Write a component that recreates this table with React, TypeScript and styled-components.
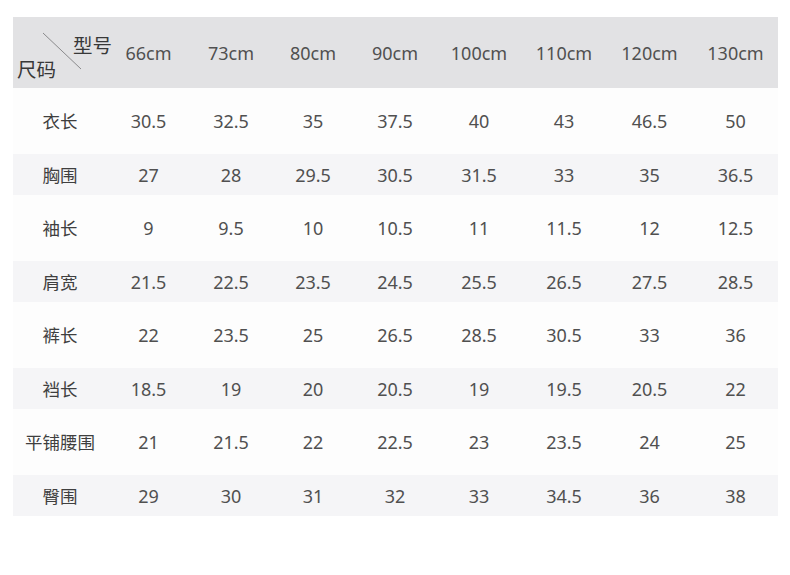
import React from "react";
import styled, { createGlobalStyle } from "styled-components";

const GlobalStyle = createGlobalStyle`
  html, body {
    margin: 0;
    padding: 0;
    background: #ffffff;
  }
  body {
    font-family: "Noto Sans", "Noto Sans CJK SC", sans-serif;
  }
`;

const sizes = ["66cm", "73cm", "80cm", "90cm", "100cm", "110cm", "120cm", "130cm"];

const rows: { label: string; values: string[] }[] = [
  { label: "衣长", values: ["30.5", "32.5", "35", "37.5", "40", "43", "46.5", "50"] },
  { label: "胸围", values: ["27", "28", "29.5", "30.5", "31.5", "33", "35", "36.5"] },
  { label: "袖长", values: ["9", "9.5", "10", "10.5", "11", "11.5", "12", "12.5"] },
  { label: "肩宽", values: ["21.5", "22.5", "23.5", "24.5", "25.5", "26.5", "27.5", "28.5"] },
  { label: "裤长", values: ["22", "23.5", "25", "26.5", "28.5", "30.5", "33", "36"] },
  { label: "裆长", values: ["18.5", "19", "20", "20.5", "19", "19.5", "20.5", "22"] },
  { label: "平铺腰围", values: ["21", "21.5", "22", "22.5", "23", "23.5", "24", "25"] },
  { label: "臀围", values: ["29", "30", "31", "32", "33", "34.5", "36", "38"] },
];

const Page = styled.div`
  padding: 17px 12px 0 13px;
`;

const Table = styled.div`
  width: 765px;
  display: flex;
  flex-direction: column;
`;

const Row = styled.div<{ $tone: "head" | "light" | "shade" }>`
  display: grid;
  grid-template-columns: 94px 83px 82px 82px 82px 86px 84px 87px 85px;
  align-items: center;
  height: ${(p) => (p.$tone === "head" ? 71 : p.$tone === "shade" ? 41 : 66)}px;
  background: ${(p) =>
    p.$tone === "head" ? "#e2e2e4" : p.$tone === "shade" ? "#f5f5f7" : "#fdfdfd"};
`;

const Cell = styled.div`
  text-align: center;
  font-size: 18px;
  color: #505050;
  line-height: 1;
  white-space: nowrap;
`;

const Label = styled.div`
  text-align: center;
  font-size: 17.5px;
  color: #3f3f3f;
  line-height: 1;
  white-space: nowrap;
  font-family: "Noto Sans CJK SC", "Noto Sans", sans-serif;
`;

const Corner = styled.div`
  position: relative;
  height: 71px;
  display: flex;
  flex-direction: column;
  justify-content: flex-start;
  padding-top: 18px;
  box-sizing: border-box;
  font-family: "Noto Sans CJK SC", "Noto Sans", sans-serif;
  font-size: 19.5px;
  line-height: 20px;
  color: #383838;
  white-space: nowrap;
`;

const ModelText = styled.span`
  margin-left: 60px;
`;

const SizeText = styled.span`
  margin-left: 4px;
  margin-top: 4px;
`;

const Slash = styled.svg`
  position: absolute;
  left: 0;
  top: 0;
  pointer-events: none;
`;

export default function App() {
  return (
    <Page>
      <GlobalStyle />
      <Table>
        <Row $tone="head">
          <Corner>
            <Slash width="94" height="71" viewBox="0 0 94 71">
              <line x1="30" y1="16" x2="68" y2="52" stroke="#8a8a8c" strokeWidth="1" />
            </Slash>
            <ModelText>型号</ModelText>
            <SizeText>尺码</SizeText>
          </Corner>
          {sizes.map((s) => (
            <Cell key={s}>{s}</Cell>
          ))}
        </Row>
        {rows.map((r, i) => (
          <Row key={r.label} $tone={i % 2 === 0 ? "light" : "shade"}>
            <Label>{r.label}</Label>
            {r.values.map((v, j) => (
              <Cell key={j}>{v}</Cell>
            ))}
          </Row>
        ))}
      </Table>
    </Page>
  );
}
